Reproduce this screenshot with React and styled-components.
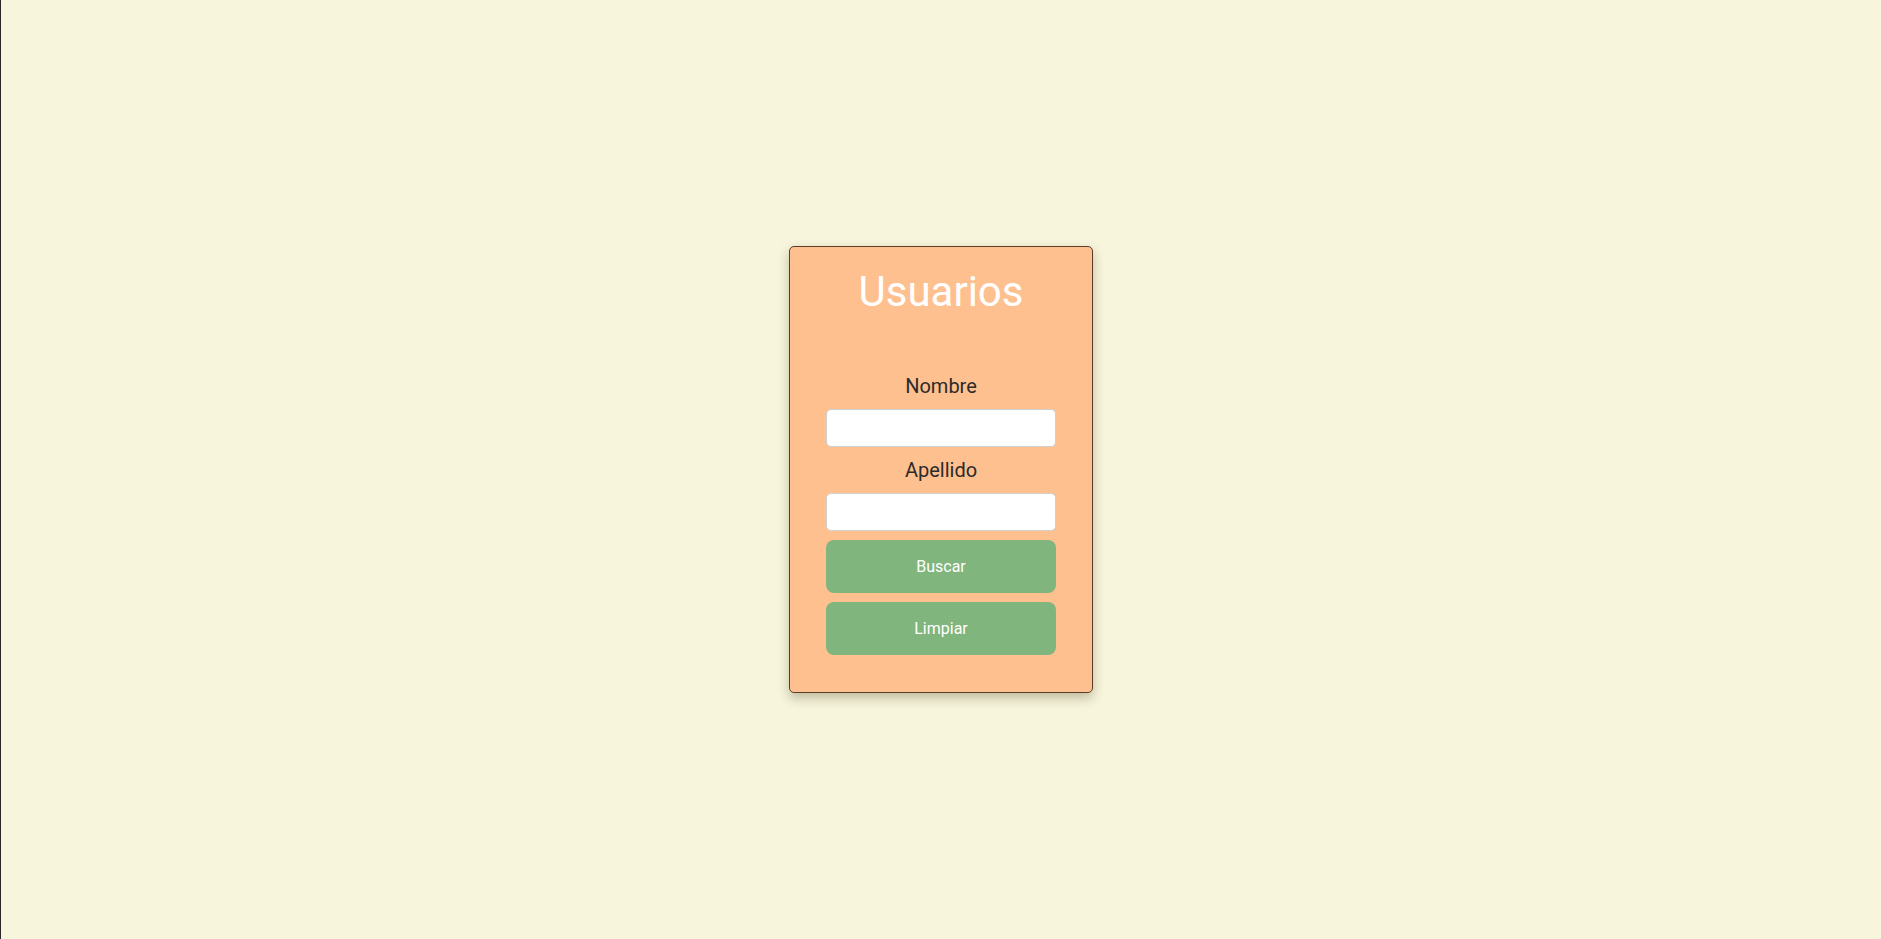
import React, { useState } from 'react';
import styled, { createGlobalStyle } from 'styled-components';

const GlobalStyle = createGlobalStyle`
  * {
    box-sizing: border-box;
  }
  body {
    margin: 0;
    background: #f7f5dc;
    font-family: Roboto, "Liberation Sans", sans-serif;
  }
`

const Page = styled.div`
  min-height: 100vh;
  border-left: 1px solid #2a2a2a;
  display: flex;
  align-items: center;
  justify-content: center;
`

const Card = styled.div`
  width: 304px;
  padding: 20px 36px 37px;
  background: #ffc08f;
  border: 1px solid #5a3d2b;
  border-radius: 5px;
  box-shadow: 0 5px 12px rgba(60, 50, 20, 0.3);
`

const Title = styled.h1`
  margin: 0 0 58px;
  font-size: 42px;
  font-weight: 400;
  line-height: normal;
  color: #ffffff;
  text-align: center;
`

const Form = styled.form`
  display: flex;
  flex-direction: column;
  gap: 9px;
`

const Field = styled.div`
  display: flex;
  flex-direction: column;
  gap: 11px;

  & + & {
    margin-top: 2.5px;
  }
`

const Label = styled.label`
  font-size: 20px;
  line-height: normal;
  color: #2b2b2b;
  text-align: center;
`

const Input = styled.input`
  height: 38px;
  width: 100%;
  padding: 0 8px;
  font-family: Roboto, "Liberation Sans", sans-serif;
  font-size: 16px;
  background: #ffffff;
  border: 1px solid #cfcfcf;
  border-radius: 5px;
  outline: none;
`

const Button = styled.button`
  height: 53px;
  width: 100%;
  border: none;
  border-radius: 8px;
  background: #80b57d;
  color: #ffffff;
  font-family: Roboto, "Liberation Sans", sans-serif;
  font-size: 16px;
  cursor: pointer;
`

export default function App() {
  const [user, setUser] = useState({ nombre: '', apellido: '' })

  function handleChange(event) {
    const { name, value } = event.target
    setUser(prev => ({ ...prev, [name]: value }))
  }

  function limpiar() {
    setUser({ nombre: '', apellido: '' })
  }

  return (
    <Page>
      <GlobalStyle />
      <Card>
        <Title>Usuarios</Title>
        <Form onSubmit={e => e.preventDefault()}>
          <Field>
            <Label htmlFor='nombre'>Nombre</Label>
            <Input id='nombre' name='nombre' value={user.nombre} onChange={handleChange} />
          </Field>
          <Field>
            <Label htmlFor='apellido'>Apellido</Label>
            <Input id='apellido' name='apellido' value={user.apellido} onChange={handleChange} />
          </Field>
          <Button type='submit'>Buscar</Button>
          <Button type='button' onClick={limpiar}>Limpiar</Button>
        </Form>
      </Card>
    </Page>
  )
}
